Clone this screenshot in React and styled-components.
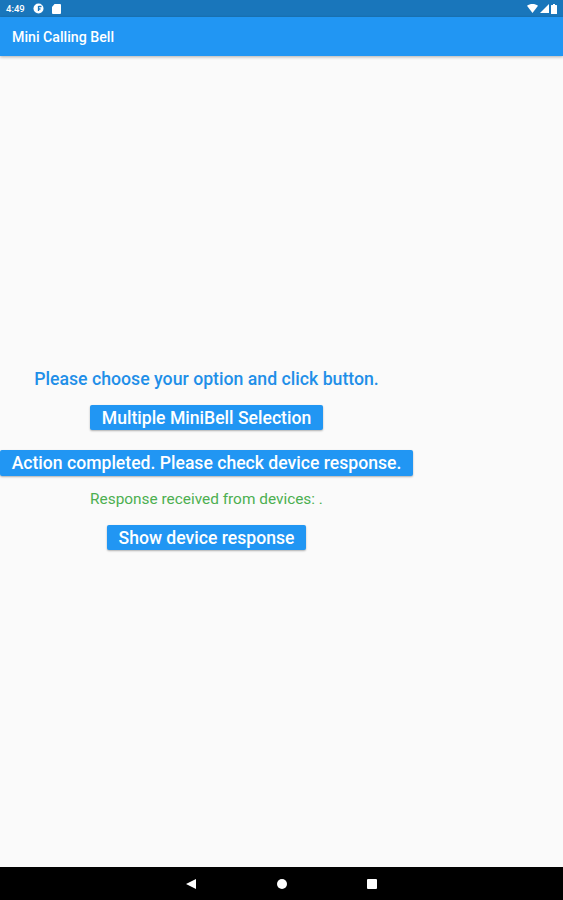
import React from 'react';
import styled, { createGlobalStyle } from 'styled-components';

const Global = createGlobalStyle`
  html, body {
    margin: 0;
    padding: 0;
    background: #fafafa;
    font-family: Roboto, "Liberation Sans", sans-serif;
  }
`;

const Screen = styled.div`
  width: 563px;
  height: 900px;
  display: flex;
  flex-direction: column;
  overflow: hidden;
  background: #fafafa;
`;

const StatusBar = styled.div`
  height: 17px;
  flex: none;
  display: flex;
  align-items: center;
  justify-content: space-between;
  padding: 0 6px;
  background: #1976bb;
  color: #fff;
`;

const StatusGroup = styled.div`
  display: flex;
  align-items: center;
  gap: ${(p) => p.$gap}px;
`;

const Clock = styled.span`
  font-size: 9.5px;
  font-weight: 500;
`;

const AppBar = styled.header`
  height: 39px;
  flex: none;
  display: flex;
  align-items: center;
  padding: 1px 12px 0;
  box-sizing: border-box;
  background: #2196f3;
  color: #fff;
  font-size: 14.2px;
  font-weight: 500;
  box-shadow: 0 1px 3px rgba(0, 0, 0, 0.3);
  z-index: 1;
`;

const Body = styled.main`
  flex: 1;
  display: flex;
  align-items: center;
  padding-bottom: 4px;
`;

const Column = styled.div`
  width: 413px;
  display: flex;
  flex-direction: column;
  align-items: center;
`;

const Prompt = styled.div`
  font-size: 17.7px;
  line-height: 21px;
  font-weight: 500;
  color: #1f8fe8;
  white-space: nowrap;
  margin-bottom: 15px;
`;

const ActionButton = styled.button`
  height: 25.5px;
  padding: 0 11.5px;
  border: 0;
  border-radius: 2px;
  background: #2196f3;
  color: #fff;
  font-family: inherit;
  font-size: 17.6px;
  font-weight: 500;
  white-space: nowrap;
  box-shadow: 0 1px 2px rgba(0, 0, 0, 0.3);
  margin-bottom: ${(p) => p.$after}px;
`;

const Response = styled.div`
  font-size: 15.4px;
  line-height: 19px;
  color: #4caf50;
  margin-bottom: 16px;
`;

const NavBar = styled.nav`
  height: 33px;
  flex: none;
  display: flex;
  align-items: center;
  justify-content: center;
  gap: 78.500px;
  background: #000;
`;

const NavIcon = styled.svg`
  width: 12px;
  height: 12px;
  fill: #fff;
`;

function App() {
  return (
    <>
      <Global />
      <Screen>
        <StatusBar>
          <StatusGroup $gap={8}>
            <Clock>4:49</Clock>
            <svg width="11" height="11" viewBox="0 0 11 11">
              <circle cx="5.5" cy="5.5" r="5" fill="#fff" />
              <path d="M5.5 3v5M5.5 3.5h3M5.5 6h2" stroke="#1976bb" strokeWidth="1.3" fill="none" />
            </svg>
            <svg width="9" height="10" viewBox="0 0 9 10">
              <path d="M2.5 0H8a1 1 0 0 1 1 1v8a1 1 0 0 1-1 1H1a1 1 0 0 1-1-1V3z" fill="#fff" />
            </svg>
          </StatusGroup>
          <StatusGroup $gap={2}>
            <svg width="11" height="9" viewBox="0 0 11 9">
              <path d="M0 1.8C3-.6 8-.6 11 1.8L5.5 9z" fill="#fff" />
            </svg>
            <svg width="9" height="9" viewBox="0 0 9 9">
              <path d="M9 0v9H0z" fill="#fff" />
            </svg>
            <svg width="6" height="10" viewBox="0 0 6 10">
              <path d="M2 0h2v1h1.500a.5.5 0 0 1 .5.500V10H0V1.500A.5.5 0 0 1 .5 1H2z" fill="#fff" />
            </svg>
          </StatusGroup>
        </StatusBar>
        <AppBar>Mini Calling Bell</AppBar>
        <Body>
          <Column>
            <Prompt>Please choose your option and click button.</Prompt>
            <ActionButton $after={20}>Multiple MiniBell Selection</ActionButton>
            <ActionButton $after={14}>Action completed. Please check device response.</ActionButton>
            <Response>Response received from devices: .</Response>
            <ActionButton $after={0}>Show device response</ActionButton>
          </Column>
        </Body>
        <NavBar>
          <NavIcon viewBox="0 0 12 12"><path d="M11 1v10L1 6z" /></NavIcon>
          <NavIcon viewBox="0 0 12 12"><circle cx="6" cy="6" r="5" /></NavIcon>
          <NavIcon viewBox="0 0 12 12"><rect x="1" y="1" width="10" height="10" rx="1" /></NavIcon>
        </NavBar>
      </Screen>
    </>
  );
}

export default App;
